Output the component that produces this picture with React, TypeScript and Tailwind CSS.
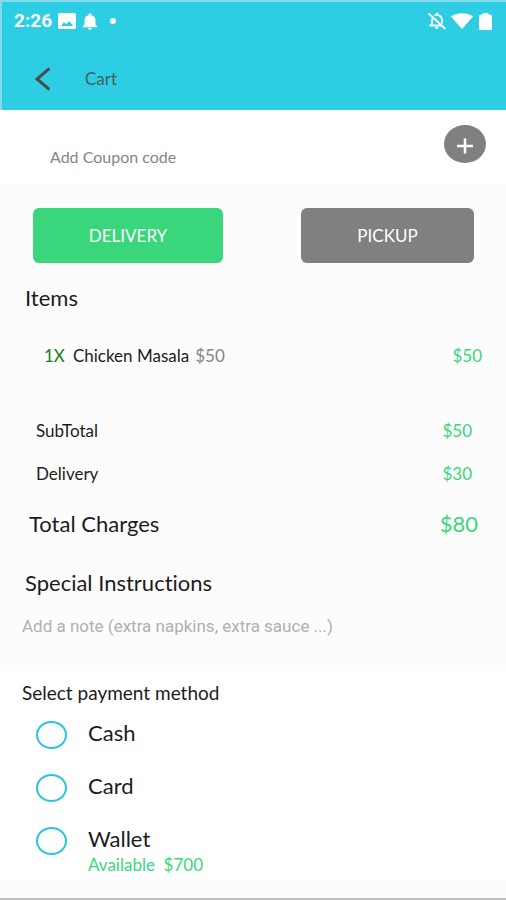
import { useState } from "react";

const charges = [
  { label: "SubTotal", amount: "$50" },
  { label: "Delivery", amount: "$30" },
];

const methods = [
  { id: "cash", label: "Cash", note: "" },
  { id: "card", label: "Card", note: "" },
  { id: "wallet", label: "Wallet", note: "Available  $700" },
];

const StatusBar = () => {
  return (
    <div className="flex h-[38px] items-center justify-between px-3 text-white">
      <div className="flex items-center">
        <span className="font-['Roboto',sans-serif] text-[19px] font-bold leading-5">
          2:26
        </span>
        {/* picture */}
        <svg viewBox="0 0 18 16" className="ml-1.5 h-4 w-[18px]">
          <rect width="18" height="16" rx="1.5" fill="currentColor" />
          <path d="M3 13l2.800-3.800L8.200 11l3.300-2.800L15 13z" fill="#2dcde4" />
        </svg>
        {/* bell */}
        <svg viewBox="0 0 16 17" className="ml-1.5 h-[17px] w-4" fill="currentColor">
          <path d="M8 0.5c1 0 1.600.5 1.600 1.300v.4C12 2.800 13.500 4.800 13.500 7.200v4.300l1.700 1.700v1H.8v-1l1.700-1.700V7.200c0-2.400 1.500-4.400 3.900-5v-.4C6.400 1 7 .5 8 .5zM6 15h4c0 1-.8 1.700-2 1.700S6 16 6 15z" />
        </svg>
        <span className="ml-3 size-1.5 rounded-full bg-white" />
      </div>
      <div className="flex items-center">
        {/* muted bell */}
        <svg viewBox="0 0 20 18" className="h-[18px] w-5" fill="none" stroke="currentColor">
          <path d="M5.500 6C4.800 8 5 10 5 13H3M2.500 13.500h12M7.500 3.500c3.500-1.500 7.500.5 7.500 4.500v3.500" strokeWidth="1.8" />
          <path d="M9 .8h2.200v2.400H9zM8 15h3.600c0 2.600-3.600 2.600-3.600 0z" fill="currentColor" stroke="none" />
          <path d="M1.500 1.500l17 15.500" strokeWidth="1.8" />
        </svg>
        {/* wifi */}
        <svg viewBox="0 0 22 16" className="ml-1 h-4 w-[22px]" fill="currentColor">
          <path d="M0 3.500C3 1 7 .3 11 .3s8 .7 11 3.200L11.800 15.200c-.5.500-1.100.5-1.600 0z" />
        </svg>
        {/* battery */}
        <svg viewBox="0 0 13 17" className="ml-1.5 mr-0.5 h-[17px] w-[13px]" fill="currentColor">
          <path d="M4 0h5l1.200 1.700H11.500c.8 0 1.500.7 1.500 1.500V16c0 .6-.4 1-1 1H1c-.6 0-1-.4-1-1V3.200c0-.8.7-1.500 1.500-1.500h1.300z" />
        </svg>
      </div>
    </div>
  );
};

const App = () => {
  const [method, setMethod] = useState("");

  return (
    <div className="flex min-h-screen flex-col border-b-2 border-[#c0c0c0] bg-[#fcfcfc] font-['Lato',sans-serif] text-[#1c1c1c] [font-variant-ligatures:none]">
      <header className="h-[110px] border-l-2 border-t-2 border-[#83dcec] bg-[#2dcde4]">
        <StatusBar />
        <div className="flex h-[78px] items-center pl-8">
          <button type="button" aria-label="Back" className="flex text-[#4c4c4c]">
            <svg viewBox="0 0 16 24" className="h-6 w-4" fill="none" stroke="currentColor" strokeWidth="3">
              <path d="M15.500 1.500L3 12l12.500 10.500" />
            </svg>
          </button>
          <h1 className="ml-[35px] text-[17px] text-[#4c5c60]">Cart</h1>
        </div>
      </header>

      {/* Coupon */}
      <section className="flex h-[74px] items-start justify-between bg-white pl-[50px] pr-5">
        <input
          type="text"
          aria-label="Coupon code"
          placeholder="Add Coupon code"
          className="mt-[35px] h-6 min-w-0 flex-1 text-base outline-none placeholder:text-[#858585]"
        />
        <button
          type="button"
          aria-label="Add coupon"
          className="mt-[15px] flex h-[38px] w-[42px] items-center justify-center rounded-[50%] bg-[#808080] text-white"
        >
          <svg viewBox="0 0 16 16" className="mt-1 size-4" stroke="currentColor" strokeWidth="2.5">
            <path d="M8 0.5v15M0 8h16" />
          </svg>
        </button>
      </section>

      {/* Delivery or pickup */}
      <div className="mt-6 flex justify-between pl-[33px] pr-8">
        <button type="button" className="h-[55px] w-[190px] rounded-md bg-[#3ad67c] text-[17px] text-white">
          DELIVERY
        </button>
        <button type="button" className="h-[55px] w-[173px] rounded-md bg-[#808080] text-[17px] text-white">
          PICKUP
        </button>
      </div>

      {/* Items */}
      <section className="mt-[23px]">
        <h2 className="pl-[25px] text-[22px] leading-6">Items</h2>
        <div className="mt-[34px] flex items-center pl-11 pr-6 text-[17px] leading-6">
          <span className="text-[#227a22]">1X</span>
          <span className="ml-2">Chicken Masala</span>
          <span className="ml-1.5 text-[#858585]">$50</span>
          <span className="ml-auto text-[#3ad67c]">$50</span>
        </div>
      </section>

      {/* Charges */}
      <dl className="mt-[51px] text-[17px] leading-6">
        {charges.map((charge) => (
          <div key={charge.label} className="mb-[19px] flex justify-between pl-9 pr-[34px]">
            <dt>{charge.label}</dt>
            <dd className="text-[#3ad67c]">{charge.amount}</dd>
          </div>
        ))}
        <div className="mt-[26px] flex justify-between pl-[29px] pr-7 text-[22px] leading-6">
          <dt>Total Charges</dt>
          <dd className="text-[#3ad67c]">$80</dd>
        </div>
      </dl>

      {/* Special instructions */}
      <section className="mt-[35px]">
        <label htmlFor="note" className="block pl-[25px] text-[22px] leading-6">
          Special Instructions
        </label>
        <input
          id="note"
          type="text"
          placeholder="Add a note (extra napkins, extra sauce ...)"
          className="mt-5 block h-6 w-full pl-[22px] font-['Roboto',sans-serif] text-[17px] outline-none placeholder:text-[#b0b0b0]"
        />
      </section>

      {/* Payment */}
      <fieldset className="mt-8 bg-white">
        <legend className="float-left mt-2.5 w-full pl-[22px] text-[19px] leading-6">
          Select payment method
        </legend>
        <div className="clear-both flex flex-col gap-[25px] pl-9 pt-4">
          {methods.map((item) => (
            <label key={item.id} className="flex items-start gap-[21px]">
              <input
                type="radio"
                name="method"
                value={item.id}
                checked={method === item.id}
                onChange={() => setMethod(item.id)}
                className="h-7 w-[31px] shrink-0 appearance-none rounded-[50%] border-2 border-[#2bc6de] checked:bg-[#2bc6de]"
              />
              <span className="flex flex-col">
                <span className="text-[22px] leading-6">{item.label}</span>
                {item.note && (
                  <span className="whitespace-pre text-[17px] leading-7 text-[#3ad67c]">
                    {item.note}
                  </span>
                )}
              </span>
            </label>
          ))}
        </div>
      </fieldset>
    </div>
  );
};

export default App;
